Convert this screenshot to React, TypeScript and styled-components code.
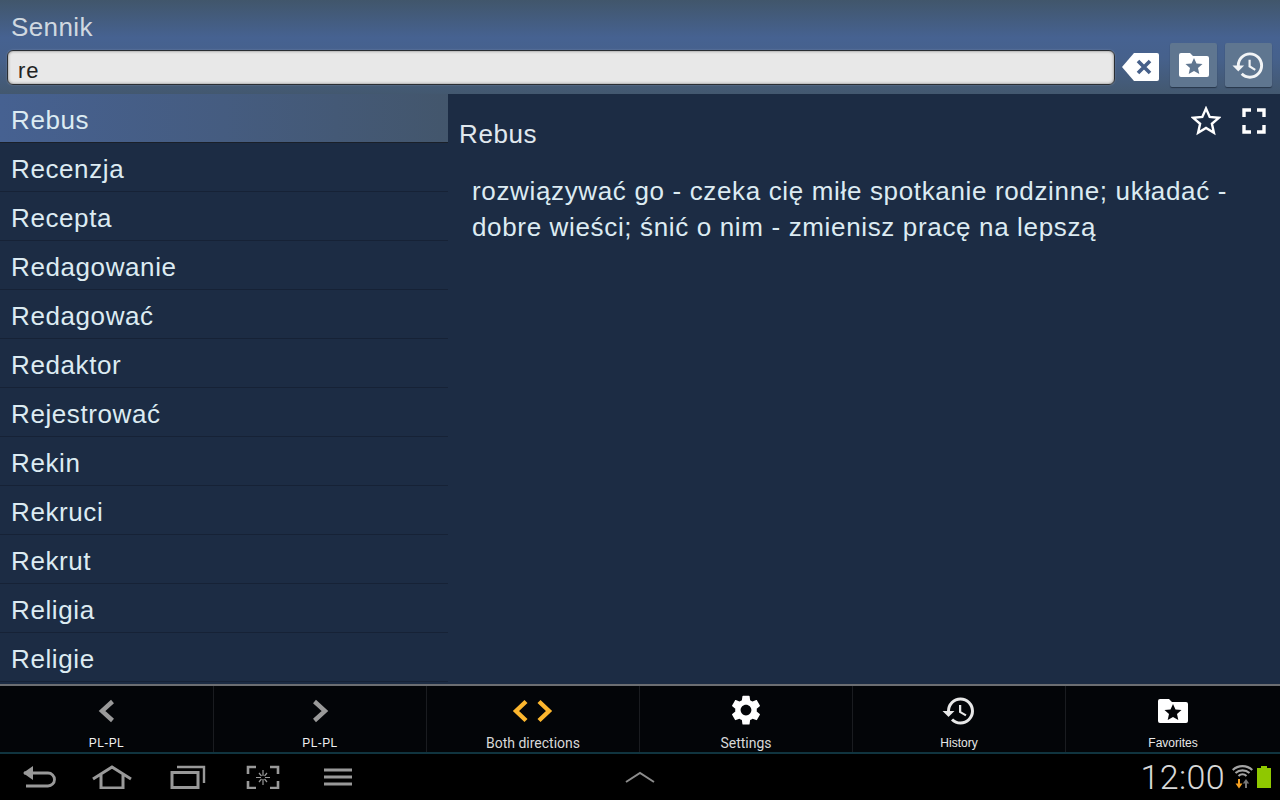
import React from "react";
import styled, { createGlobalStyle } from "styled-components";

const HISTORY_D = "M13 3a9 9 0 0 0-9 9H1l3.89 3.89.07.14L9 12H6c0-3.87 3.13-7 7-7s7 3.13 7 7-3.13 7-7 7c-1.93 0-3.68-.79-4.94-2.06l-1.42 1.42A8.954 8.954 0 0 0 13 21a9 9 0 0 0 0-18zm-1 5v5l4.28 2.54.72-1.21-3.5-2.08V8H12z";
const GEAR_D = "M19.14,12.94c0.04-0.3,0.06-0.61,0.06-0.94c0-0.32-0.02-0.64-0.07-0.94l2.03-1.58c0.18-0.14,0.23-0.41,0.12-0.61 l-1.92-3.32c-0.12-0.22-0.37-0.29-0.59-0.22l-2.39,0.96c-0.5-0.38-1.03-0.7-1.62-0.94L14.4,2.81c-0.04-0.24-0.24-0.41-0.48-0.41 h-3.84c-0.24,0-0.43,0.17-0.47,0.41L9.25,5.35C8.66,5.59,8.12,5.92,7.63,6.29L5.24,5.33c-0.22-0.08-0.47,0-0.59,0.22L2.74,8.87 C2.62,9.08,2.66,9.34,2.86,9.48l2.03,1.58C4.84,11.36,4.8,11.69,4.8,12s0.02,0.64,0.07,0.94l-2.03,1.58 c-0.18,0.14-0.23,0.41-0.12,0.61l1.92,3.32c0.12,0.22,0.37,0.29,0.59,0.22l2.39-0.96c0.5,0.38,1.03,0.7,1.62,0.94l0.36,2.54 c0.05,0.24,0.24,0.41,0.48,0.41h3.84c0.24,0,0.44-0.17,0.47-0.41l0.36-2.54c0.59-0.24,1.13-0.56,1.62-0.94l2.39,0.96 c0.22,0.08,0.47,0,0.59-0.22l1.92-3.32c0.12-0.22,0.07-0.47-0.12-0.61L19.14,12.94z M12,15.6c-1.98,0-3.6-1.62-3.6-3.6 s1.62-3.6,3.6-3.6s3.6,1.62,3.6,3.6S13.98,15.6,12,15.6z";

const words = ["Recenzja", "Recepta", "Redagowanie", "Redagować", "Redaktor", "Rejestrować", "Rekin", "Rekruci", "Rekrut", "Religia", "Religie"];

const GlobalStyle = createGlobalStyle`
  html, body {
    margin: 0;
    padding: 0;
    background: #000;
  }
  * {
    box-sizing: border-box;
  }
`;

const Screen = styled.div`
  width: 1280px;
  height: 800px;
  display: flex;
  flex-direction: column;
  overflow: hidden;
  font-family: "Liberation Sans", Arial, sans-serif;
`;

const Header = styled.header`
  height: 94px;
  flex: none;
  padding: 12px 8px 0 7px;
  background: linear-gradient(180deg, #41566b 0%, #466291 40%, #46618c 62%, #43586f 100%);
`;

const Title = styled.div`
  height: 31px;
  padding-left: 4px;
  font-size: 26px;
  line-height: 30px;
  letter-spacing: 0.4px;
  color: #d0d8e0;
`;

const SearchRow = styled.div`
  display: flex;
  align-items: flex-start;
`;

const SearchInput = styled.input`
  width: 1108px;
  height: 35px;
  margin-top: 7px;
  padding: 6px 0 0 10px;
  flex: none;
  font-family: "Liberation Sans", sans-serif;
  font-size: 22px;
  letter-spacing: 0.8px;
  color: #222;
  background: #e8e8e8;
  border: 1px solid #2a2e33;
  border-radius: 6px;
  box-shadow: inset 0 0 3px #777, 0 0 2px rgba(255, 255, 255, 0.25);
  outline: none;
`;

const ClearIcon = styled.svg`
  width: 37px;
  height: 28px;
  margin: 10px 11px 0 7px;
  flex: none;
`;

const HeadButton = styled.div<{ $gap?: boolean }>`
  width: 47px;
  height: 44px;
  margin-left: ${(p) => (p.$gap ? "8px" : "0")};
  flex: none;
  display: flex;
  align-items: center;
  justify-content: center;
  background: #5f7690;
  border-radius: 2px;
  box-shadow: 0 1px 1px rgba(20, 30, 45, 0.6);
`;

const Main = styled.main`
  flex: 1;
  display: flex;
  min-height: 0;
  background: #1c2c44;
`;

const List = styled.ul`
  width: 448px;
  flex: none;
  margin: 0;
  padding: 0;
  list-style: none;
`;

const Row = styled.li<{ $selected?: boolean }>`
  height: 49px;
  padding: 2px 0 0 11px;
  font-size: 26px;
  line-height: 48px;
  letter-spacing: 0.6px;
  color: #dcebf2;
  border-bottom: 1px solid ${(p) => (p.$selected ? "#1a2029" : "#162236")};
  background: ${(p) => (p.$selected ? "linear-gradient(90deg, #466191 0%, #455c80 50%, #43566c 100%)" : "transparent")};
`;

const Detail = styled.section`
  flex: 1;
  padding: 12px 14px 0 11px;
`;

const DetailHead = styled.div`
  display: flex;
  justify-content: space-between;
  height: 56px;
`;

const Word = styled.h2`
  margin: 12px 0 0;
  font-size: 26px;
  font-weight: 400;
  line-height: 32px;
  letter-spacing: 0.6px;
  color: #e0e8ee;
`;

const Actions = styled.div`
  display: flex;
  gap: 21px;
`;

const Meaning = styled.p`
  margin: 11px 0 0 13px;
  width: 790px;
  font-size: 26px;
  line-height: 36px;
  letter-spacing: 0.65px;
  color: #dcebf2;
`;

const TabBar = styled.nav`
  height: 70px;
  flex: none;
  display: grid;
  grid-template-columns: repeat(5, 213px) 1fr;
  background: #030508;
  border-top: 2px solid #6c6e72;
  border-bottom: 2px solid #10343f;
`;

const Tab = styled.div`
  display: flex;
  flex-direction: column;
  align-items: center;
  border-left: 1px solid #1a1c20;
  &:first-child {
    border-left: 0;
  }
`;

const TabIcon = styled.div`
  height: 50px;
  display: flex;
  align-items: center;
  justify-content: center;
`;

const TabLabel = styled.div<{ $size: number; $color: string; $roboto?: boolean; $spacing?: number }>`
  font-family: ${(p) => (p.$roboto ? "Roboto, sans-serif" : '"Liberation Sans", sans-serif')};
  font-size: ${(p) => p.$size}px;
  letter-spacing: ${(p) => p.$spacing ?? 0}px;
  line-height: 16px;
  margin-top: -1px;
  color: ${(p) => p.$color};
`;

const NavBar = styled.footer`
  height: 46px;
  flex: none;
  display: grid;
  grid-template-columns: 1fr auto 1fr;
  align-items: center;
  background: #000;
`;

const NavLeft = styled.div`
  display: flex;
  align-items: center;
  padding-left: 22px;
`;

const NavSlot = styled.div<{ $w: number }>`
  width: ${(p) => p.$w}px;
  flex: none;
  display: flex;
`;

const Status = styled.div`
  display: flex;
  align-items: center;
  justify-content: flex-end;
  gap: 4px;
  padding-right: 9px;
`;

const Clock = styled.span`
  font-family: Roboto, sans-serif;
  font-size: 34px;
  font-weight: 300;
  line-height: 46px;
  letter-spacing: 0.4px;
  color: #d8d8d8;
  margin-right: 3px;
`;

function FolderStar({ star }: { star: string }) {
  return (
    <svg width={30} height={24} viewBox="0 0 30 24">
      <path d="M2 0h9l3 3h14a2 2 0 0 1 2 2v17a2 2 0 0 1-2 2H2a2 2 0 0 1-2-2V2a2 2 0 0 1 2-2z" fill="#fff" />
      <path d="M15 5l2.500 5.500 6 .6-4.500 4 1.300 5.900-5.300-3-5.300 3 1.300-5.900-4.500-4 6-.6z" fill={star} />
    </svg>
  );
}

function History({ size, color }: { size: number; color: string }) {
  return (
    <svg width={size} height={size} viewBox="0 0 24 24">
      <path d={HISTORY_D} fill={color} />
    </svg>
  );
}

function Chevron({ dir, color }: { dir: "left" | "right"; color: string }) {
  const d = dir === "left" ? "M14.500 2.500L4 12 14.500 21.500" : "M3.500 2.500L14 12 3.500 21.500";
  return (
    <svg width={18} height={24} viewBox="0 0 18 24">
      <path d={d} fill="none" stroke={color} strokeWidth="4.400" />
    </svg>
  );
}

export default function App() {
  return (
    <Screen>
      <GlobalStyle />
      <Header>
        <Title>Sennik</Title>
        <SearchRow>
          <SearchInput readOnly value="re" />
          <ClearIcon viewBox="0 0 37 28">
            <path d="M12 0h23a2 2 0 0 1 2 2v24a2 2 0 0 1-2 2H12L0 14z" fill="#fff" />
            <path d="M16 8l12 12M28 8L16 20" stroke="#46608a" strokeWidth="3.600" fill="none" />
          </ClearIcon>
          <HeadButton>
            <FolderStar star="#5f7690" />
          </HeadButton>
          <HeadButton $gap>
            <History size={35} color="#f2f4f6" />
          </HeadButton>
        </SearchRow>
      </Header>

      <Main>
        <List>
          <Row $selected>Rebus</Row>
          {words.map((w) => (
            <Row key={w}>{w}</Row>
          ))}
        </List>
        <Detail>
          <DetailHead>
            <Word>Rebus</Word>
            <Actions>
              <svg width="30" height="30" viewBox="0 0 30 30">
                <path d="M15 2.500l3.700 8.400 9.100.9-6.900 6 2 8.900-7.900-4.700-7.900 4.700 2-8.900-6.900-6 9.100-.9z" fill="none" stroke="#fff" strokeWidth="2.400" />
              </svg>
              <svg width="24" height="30" viewBox="0 0 24 30">
                <path d="M2 11V4h7M15 4h7v7M22 19v7h-7M9 26H2v-7" fill="none" stroke="#fff" strokeWidth="3.400" />
              </svg>
            </Actions>
          </DetailHead>
          <Meaning>rozwiązywać go - czeka cię miłe spotkanie rodzinne; układać - dobre wieści; śnić o nim - zmienisz pracę na lepszą</Meaning>
        </Detail>
      </Main>

      <TabBar>
        <Tab>
          <TabIcon><Chevron dir="left" color="#9a9a9a" /></TabIcon>
          <TabLabel $size={12} $color="#f0f0f0" $spacing={0.4}>PL-PL</TabLabel>
        </Tab>
        <Tab>
          <TabIcon><Chevron dir="right" color="#9a9a9a" /></TabIcon>
          <TabLabel $size={12} $color="#f0f0f0" $spacing={0.4}>PL-PL</TabLabel>
        </Tab>
        <Tab>
          <TabIcon>
            <svg width="42" height="24" viewBox="0 0 42 24">
              <path d="M14 2.500L4 12 14 21.500M27 2.500L37 12 27 21.500" fill="none" stroke="#fcb62e" strokeWidth="4.400" />
            </svg>
          </TabIcon>
          <TabLabel $size={14} $color="#d8d8d8" $roboto>Both directions</TabLabel>
        </Tab>
        <Tab>
          <TabIcon>
            <svg width="36" height="36" viewBox="0 0.6 24 24">
              <path d={GEAR_D} fill="#fff" />
            </svg>
          </TabIcon>
          <TabLabel $size={14} $color="#d8d8d8" $roboto>Settings</TabLabel>
        </Tab>
        <Tab>
          <TabIcon><History size={36} color="#e8e8e8" /></TabIcon>
          <TabLabel $size={12} $color="#e8e8e8">History</TabLabel>
        </Tab>
        <Tab>
          <TabIcon><FolderStar star="#030508" /></TabIcon>
          <TabLabel $size={12} $color="#e8e8e8">Favorites</TabLabel>
        </Tab>
      </TabBar>

      <NavBar>
        <NavLeft>
          <NavSlot $w={70}>
            <svg width="34" height="24" viewBox="0 0 34 24">
              <path d="M2 8h24a6 6 0 0 1 0 13H4" fill="none" stroke="#999" strokeWidth="2.800" />
              <path d="M11 1v14L1 8z" fill="#999" />
            </svg>
          </NavSlot>
          <NavSlot $w={78}>
            <svg width="40" height="24" viewBox="0 0 40 24">
              <path d="M1 14L20 2l19 12M9 10v13h22V10" fill="none" stroke="#999" strokeWidth="3" />
            </svg>
          </NavSlot>
          <NavSlot $w={76}>
            <svg width="36" height="24" viewBox="0 0 36 24">
              <path d="M7 2h27v16" fill="none" stroke="#999" strokeWidth="2.400" />
              <rect x="2" y="7.500" width="26" height="15" fill="none" stroke="#999" strokeWidth="3" />
            </svg>
          </NavSlot>
          <NavSlot $w={78}>
            <svg width="34" height="24" viewBox="0 0 34 24">
              <path d="M10 2H2v7M24 2h8v7M32 16v7h-8M10 23H2v-7" fill="none" stroke="#999" strokeWidth="2.600" />
              <path d="M17 5v6M17 14v6M10 12.500h5M19 12.500h5M13 8l2.500 3M21 8l-2.500 3M13 17l2.500-3M21 17l-2.500-3" fill="none" stroke="#999" strokeWidth="1.200" />
            </svg>
          </NavSlot>
          <NavSlot $w={28}>
            <svg width="28" height="20" viewBox="0 0 28 20">
              <path d="M0 3h28M0 10h28M0 17h28" stroke="#999" strokeWidth="3" />
            </svg>
          </NavSlot>
        </NavLeft>
        <svg width="30" height="12" viewBox="0 0 30 12">
          <path d="M1 11L15 2l14 9" fill="none" stroke="#8c8c8c" strokeWidth="2" />
        </svg>
        <Status>
          <Clock>12:00</Clock>
          <svg width="21" height="24" viewBox="0 0 21 24">
            <path d="M.7 5a14.500 14.500 0 0 1 19.600 0M3.500 8a10.500 10.500 0 0 1 14 0M6.500 11a6 6 0 0 1 8 0" fill="none" stroke="#a4a4a4" strokeWidth="2.200" />
            <path d="M7 14v5" stroke="#f5a021" strokeWidth="2" />
            <path d="M3.500 18.500h7L7 23.500z" fill="#f5a021" />
            <path d="M14 23v-5" stroke="#777" strokeWidth="2" />
            <path d="M10.800 18.500h6.400L14 14z" fill="#777" />
          </svg>
          <svg width="14" height="22" viewBox="0 0 14 22">
            <path d="M4 0h6v2h4v20H0V2h4z" fill="#8fc800" />
          </svg>
        </Status>
      </NavBar>
    </Screen>
  );
}
